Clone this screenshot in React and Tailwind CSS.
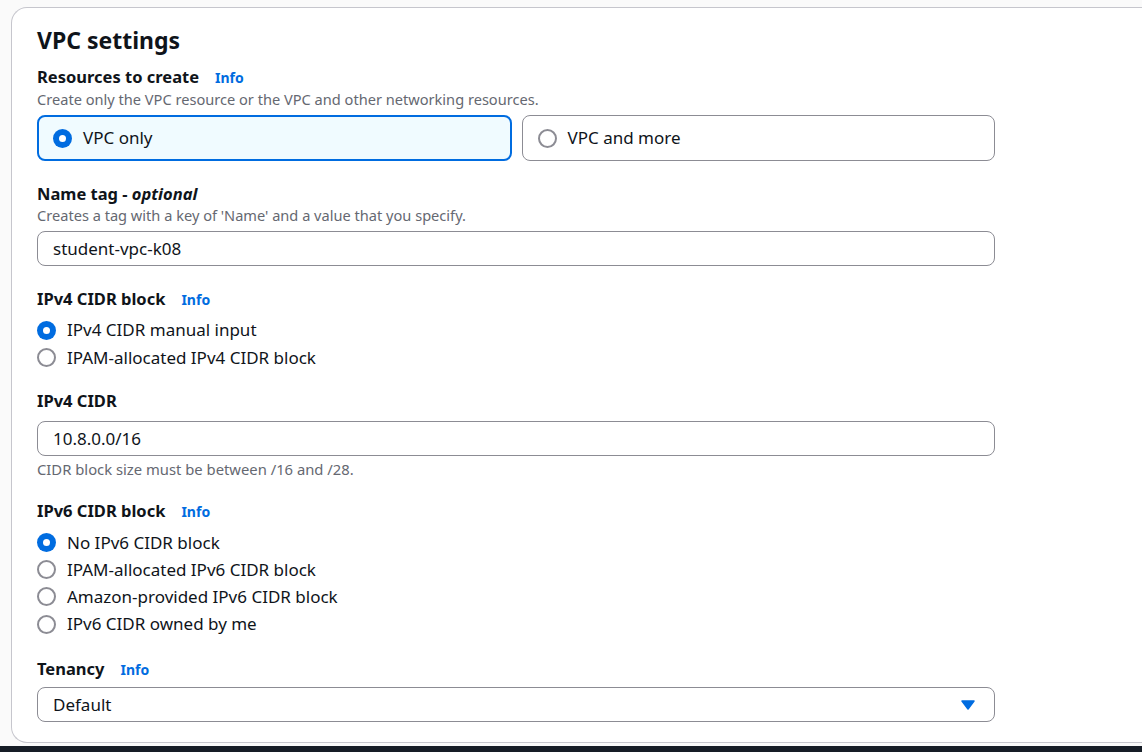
import { useState } from "react";

const font = { fontFamily: '"Noto Sans", "Open Sans", Arial, sans-serif' };

function Radio({ checked }) {
  return checked ? (
    <span className="flex h-[19px] w-[19px] shrink-0 items-center justify-center rounded-full bg-[#006ce0]">
      <span className="h-[7px] w-[7px] rounded-full bg-white" />
    </span>
  ) : (
    <span className="h-[19px] w-[19px] shrink-0 rounded-full border-2 border-[#8c8c94] bg-white" />
  );
}

function Label({ children, info }) {
  return (
    <div className="flex items-baseline gap-4 text-[16.5px] font-bold leading-[22px] text-[#0f141a]">
      <span>{children}</span>
      {info && <span className="text-[14px] font-bold text-[#006ce0]">Info</span>}
    </div>
  );
}

function Desc({ children }) {
  return <p className="text-[14.6px] leading-[20px] text-[#656871]">{children}</p>;
}

function RadioList({ options, value }) {
  return (
    <div className="mt-[8px] flex flex-col gap-[5.3px]">
      {options.map((o) => (
        <div key={o} className="flex h-[22px] items-center gap-[11px] text-[17px] text-[#0f141a]">
          <Radio checked={o === value} />
          <span>{o}</span>
        </div>
      ))}
    </div>
  );
}

function Input({ value }) {
  return (
    <div className="flex h-[35px] w-[958px] items-center rounded-lg border border-[#8c8c94] px-[15px] text-[17px] text-[#0f141a]">
      {value}
    </div>
  );
}

export default function App() {
  const [resource] = useState("VPC only");

  return (
    <div className="h-[752px] overflow-hidden bg-[#fafafa] pt-[7px]" style={font}>
      <div className="ml-[11px] h-[736px] rounded-tl-2xl rounded-bl-2xl border border-r-0 border-[#c6c6cd] bg-white pl-[25px] pt-[17px]">
        <h2 className="text-[23px] font-bold leading-[30px] text-[#0f141a]">VPC settings</h2>

        <div className="mt-[11px]">
          <Label info>Resources to create</Label>
          <Desc>Create only the VPC resource or the VPC and other networking resources.</Desc>
          <div className="mt-[6px] flex w-[958px] gap-[10px]">
            {["VPC only", "VPC and more"].map((o) =>
              o === resource ? (
                <div key={o} className="flex h-[46px] flex-1 items-center gap-[11px] rounded-lg border-2 border-[#006ce0] bg-[#f0fbff] pl-[14px] text-[17px] text-[#0f141a]">
                  <Radio checked />
                  <span>{o}</span>
                </div>
              ) : (
                <div key={o} className="flex h-[46px] flex-1 items-center gap-[11px] rounded-lg border border-[#8c8c94] pl-[15px] text-[17px] text-[#0f141a]">
                  <Radio />
                  <span>{o}</span>
                </div>
              )
            )}
          </div>
        </div>

        <div className="mt-[22px]">
          <Label>
            Name tag - <i>optional</i>
          </Label>
          <Desc>Creates a tag with a key of 'Name' and a value that you specify.</Desc>
          <div className="mt-[6px]">
            <Input value="student-vpc-k08" />
          </div>
        </div>

        <div className="mt-[22px]">
          <Label info>IPv4 CIDR block</Label>
          <RadioList options={["IPv4 CIDR manual input", "IPAM-allocated IPv4 CIDR block"]} value="IPv4 CIDR manual input" />
        </div>

        <div className="mt-[22px]">
          <Label>IPv4 CIDR</Label>
          <div className="mt-[9px]">
            <Input value="10.8.0.0/16" />
          </div>
          <p className="mt-[3px] text-[14.8px] leading-[20px] text-[#656871]">CIDR block size must be between /16 and /28.</p>
        </div>

        <div className="mt-[21px]">
          <Label info>IPv6 CIDR block</Label>
          <RadioList
            options={["No IPv6 CIDR block", "IPAM-allocated IPv6 CIDR block", "Amazon-provided IPv6 CIDR block", "IPv6 CIDR owned by me"]}
            value="No IPv6 CIDR block"
          />
        </div>

        <div className="mt-[23px]">
          <Label info>Tenancy</Label>
          <div className="mt-[6px] flex h-[35px] w-[958px] items-center justify-between rounded-lg border border-[#8c8c94] pl-[15px] pr-[19px] text-[17px] text-[#0f141a]">
            <span>Default</span>
            <svg width="14" height="10" viewBox="0 0 14 10">
              <path d="M1 1h12L7 9z" fill="#006ce0" stroke="#006ce0" strokeLinejoin="round" strokeWidth="1.5" />
            </svg>
          </div>
        </div>
      </div>
      <div className="mt-[3px] h-[6px] bg-[#161d26]" />
    </div>
  );
}
